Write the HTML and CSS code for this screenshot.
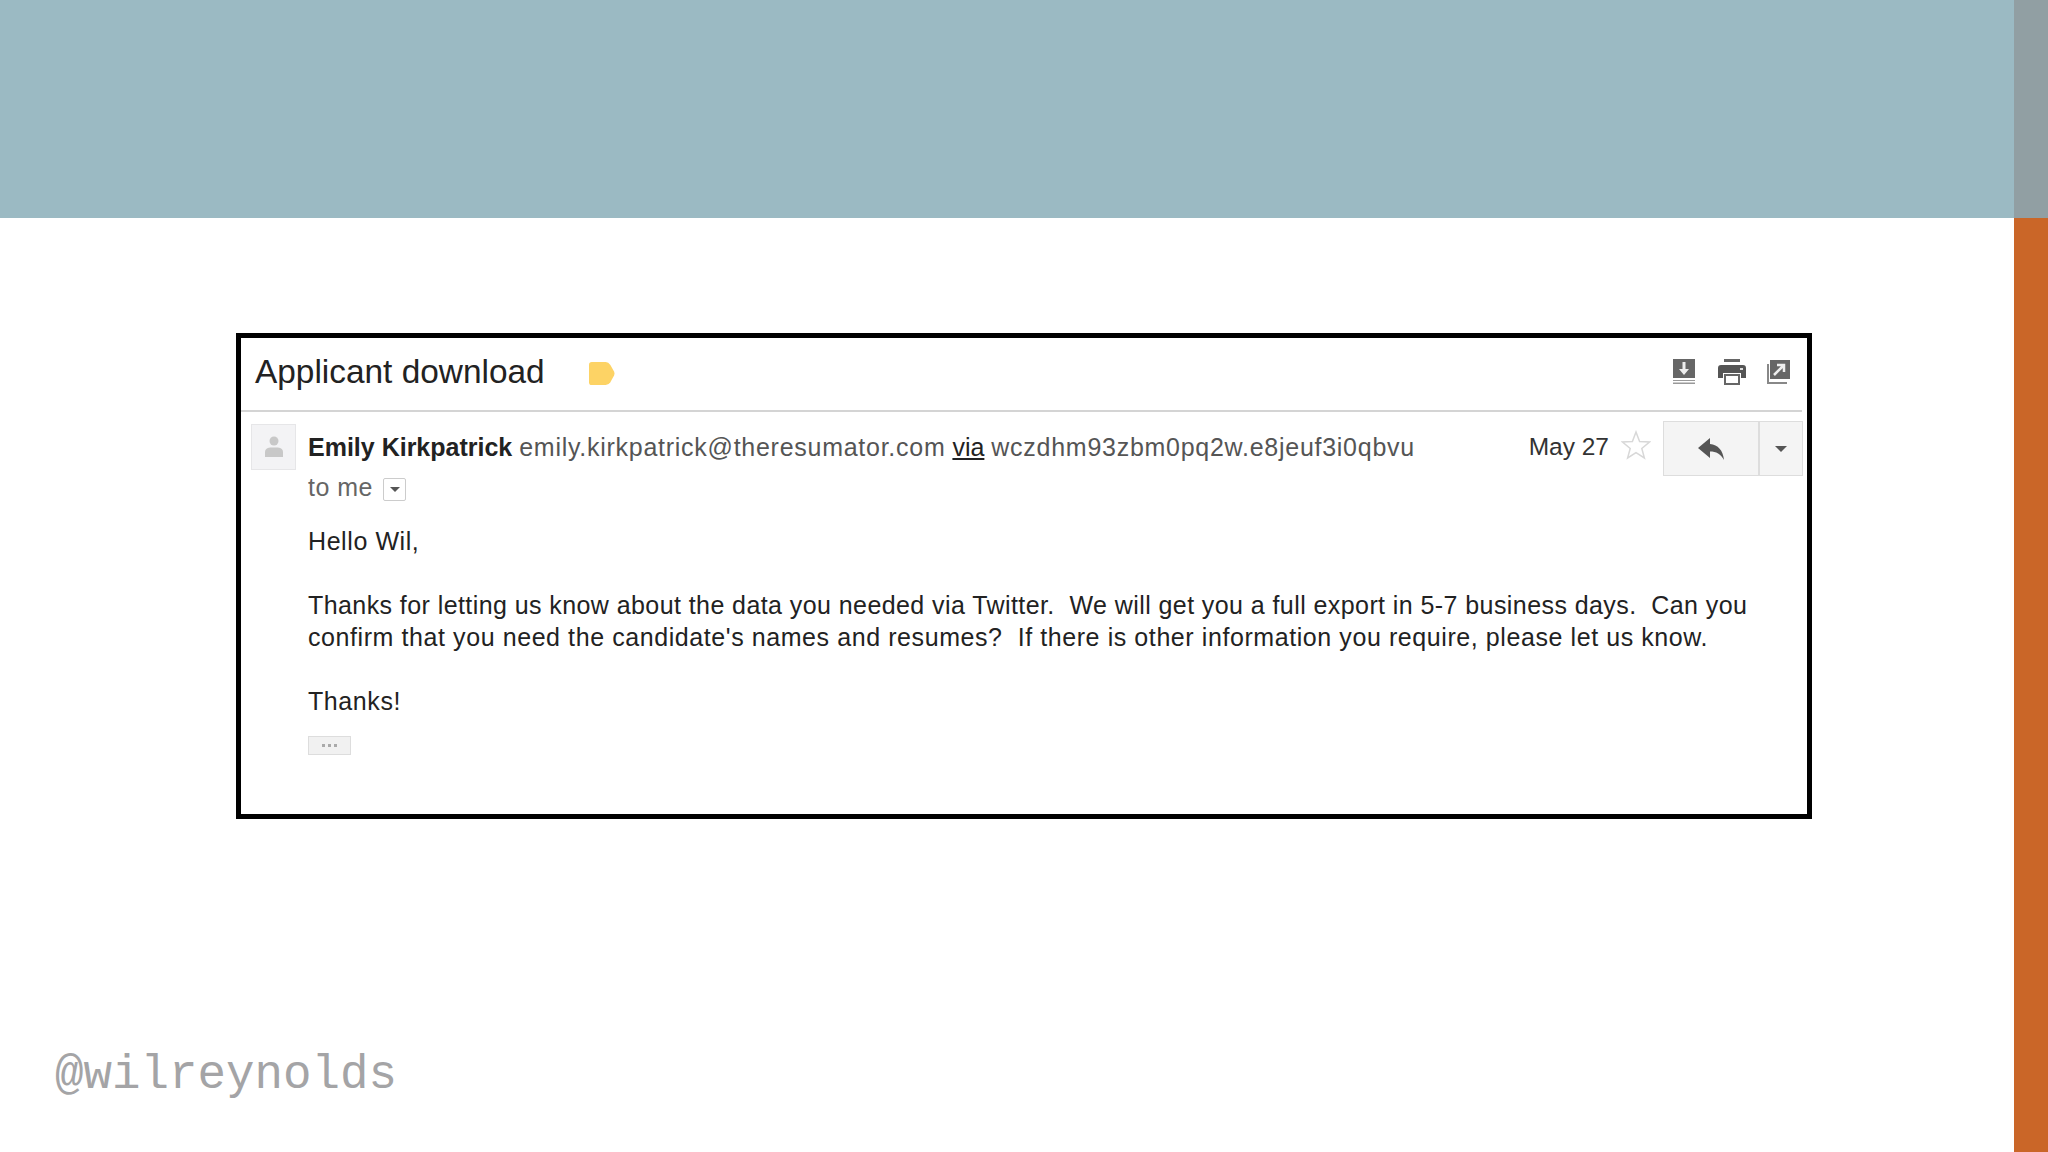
FILE: index.html
```html
<!DOCTYPE html>
<html lang="en">
<head>
    <meta charset="UTF-8">
    <title>Applicant download</title>
    <link rel="stylesheet" href="styles.css">
</head>
<body>
    <div class="slide">
        <div class="main">
            <div class="band"></div>
            <div class="content">
                <div class="mail">
                    <div class="subject">
                        <h1>Applicant download</h1>
                        <svg class="label" width="26" height="23" viewBox="0 0 28 24" preserveAspectRatio="none"><path d="M3 0H18Q21 0 23 3L27 10Q28 12 27 14L23 21Q21 24 18 24H3Q0 24 0 21V3Q0 0 3 0Z" fill="#fdd365"/></svg>
                        <div class="tools">
                            <svg width="26" height="26" viewBox="0 0 26 26"><path d="M1 0H23V19H1Z" fill="#666"/><path d="M1 21H23V22H1ZM1 23.500H23V25H1Z" fill="#999"/><path d="M10.500 3H13.500V10H17L12 16L7 10H10.500Z" fill="#eee"/></svg>
                            <svg width="28" height="26" viewBox="0 0 28 26"><path d="M6 0H22V3H6Z" fill="#666"/><path d="M3 6H25Q28 6 28 9V19H23V14H5V19H0V9Q0 6 3 6Z" fill="#555"/><path d="M7 16H21V25H7Z" fill="none" stroke="#666" stroke-width="2"/><path d="M22 9H25V11H22Z" fill="#ddd"/></svg>
                            <svg width="24" height="26" viewBox="0 0 24 26"><path d="M4 1H24V20H4Z" fill="#666"/><path d="M1 5H3V23H21V25H1Z" fill="#888"/><path d="M8 16L17 7M11 6H18V13" fill="none" stroke="#eee" stroke-width="2.500"/></svg>
                        </div>
                    </div>
                    <div class="message">
                        <div class="avatar">
                            <svg width="20" height="22" viewBox="0 0 20 22"><circle cx="10" cy="5" r="4.500" fill="#c8c8c8"/><path d="M1 21V16Q1 12 6 11.500H14Q19 12 19 16V21Z" fill="#c8c8c8"/></svg>
                        </div>
                        <div class="from">
                            <div class="sender"><b>Emily Kirkpatrick</b> <span class="addr">emily.kirkpatrick@theresumator.com</span> <u>via</u> <span class="addr">wczdhm93zbm0pq2w.e8jeuf3i0qbvu</span></div>
                            <div class="to">to me <span class="to-more"><i></i></span></div>
                        </div>
                        <div class="date">May 27</div>
                        <svg class="star" width="30" height="30" viewBox="0 0 30 30"><path d="M15 2L18.600 11.500L28.500 12L20.800 18.400L23.400 28L15 22.600L6.600 28L9.200 18.400L1.500 12L11.400 11.500Z" fill="#fff" stroke="#d8d8d8" stroke-width="1.500"/></svg>
                        <div class="reply-group">
                            <div class="reply">
                                <svg width="26" height="24" viewBox="0 0 26 24"><path d="M12 1V7C20 8 25 13 26 23C23 17 18 14.500 12 14.500V21L0 11Z" fill="#555"/></svg>
                            </div>
                            <div class="reply-more"><i></i></div>
                        </div>
                    </div>
                    <div class="body">
                        <p>Hello Wil,</p>
                        <p><span class="first-line">Thanks for letting us know about the data you needed via Twitter.&nbsp; We will get you a full export in 5-7 business days.&nbsp; Can you</span><br>confirm that you need the candidate's names and resumes?&nbsp; If there is other information you require, please let us know.</p>
                        <p>Thanks!</p>
                        <div class="trim"><i></i><i></i><i></i></div>
                    </div>
                </div>
                <div class="handle">@wilreynolds</div>
            </div>
        </div>
        <div class="side">
            <div class="side-top"></div>
            <div class="side-rest"></div>
        </div>
    </div>
</body>
</html>
```

FILE: styles.css
```css
html, body {
    margin: 0;
    height: 100%;
    background-color: #fff;
}
.slide {
    display: flex;
    height: 1152px;
    overflow: hidden;
    font-family: "Liberation Sans", Arial, sans-serif;
}
.main {
    flex: 1;
    display: flex;
    flex-direction: column;
}
.band {
    height: 218px;
    background-color: #9bbac3;
}
.content {
    flex: 1;
    padding: 115px 0 0 236px;
    position: relative;
}
.side {
    width: 34px;
    display: flex;
    flex-direction: column;
}
.side-top {
    height: 218px;
    background-color: #919fa3;
}
.side-rest {
    flex: 1;
    background-color: #ca6628;
}

/* mail screenshot */
.mail {
    box-sizing: border-box;
    width: 1576px;
    height: 486px;
    border: 5px solid #000;
    color: #222;
}
.subject {
    box-sizing: border-box;
    display: flex;
    align-items: center;
    height: 74px;
    margin-right: 5px;
    padding: 0 12px 5px 14px;
    border-bottom: 2px solid #d4d4d4;
}
.subject h1 {
    margin: 0;
    font-size: 33.400px;
    font-weight: normal;
    color: #222;
}
.label {
    margin: 3px 0 0 44px;
}
.tools {
    margin-left: auto;
    display: flex;
    align-items: center;
    gap: 20px;
}
.message {
    display: flex;
    align-items: flex-start;
    padding: 9px 4px 0 10px;
    font-size: 25px;
}
.avatar {
    box-sizing: border-box;
    width: 45px;
    height: 46px;
    margin-top: 3px;
    display: flex;
    align-items: center;
    justify-content: center;
    background-color: #f3f3f5;
    border: 1px solid #e6e6e8;
}
.from {
    margin-left: 12px;
    flex: 1;
}
.sender {
    height: 32px;
    line-height: 32px;
    margin-top: 10px;
}
.addr {
    color: #555;
    letter-spacing: 0.730px;
}
.to {
    margin-top: 8px;
    line-height: 32px;
    color: #666;
    letter-spacing: 0.500px;
    display: flex;
    align-items: center;
    gap: 10px;
}
.to-more {
    box-sizing: border-box;
    width: 23px;
    height: 23px;
    margin-top: 4px;
    border: 1px solid #ccc;
    border-radius: 2px;
    display: flex;
    align-items: center;
    justify-content: center;
}
.to-more i, .reply-more i {
    border-top: 6px solid #555;
    border-left: 6px solid transparent;
    border-right: 6px solid transparent;
}
.to-more i {
    border-width: 5px 5px 0;
}
.date {
    margin-top: 10px;
    line-height: 32px;
    font-size: 24.500px;
    color: #333;
}
.star {
    margin: 9px 0 0 12px;
}
.reply-group {
    display: flex;
    box-sizing: border-box;
    height: 55px;
    margin-left: 12px;
    border: 1px solid #ddd;
    background-color: #f4f4f4;
}
.reply {
    width: 94px;
    display: flex;
    align-items: center;
    justify-content: center;
    border-right: 2px solid #ddd;
}
.reply-more {
    width: 42px;
    display: flex;
    align-items: center;
    justify-content: center;
}
.body {
    padding: 0 0 0 67px;
    font-size: 25px;
    letter-spacing: 0.580px;
    line-height: 32px;
    color: #222;
}
.first-line {
    letter-spacing: 0.420px;
}
.body p {
    margin: 0 0 32px;
}
.body p:first-child {
    margin-top: 22px;
}
.body p:nth-child(3) {
    margin-bottom: 19px;
}
.trim {
    box-sizing: border-box;
    width: 43px;
    height: 19px;
    display: flex;
    align-items: center;
    justify-content: center;
    gap: 3px;
    background-color: #f1f1f1;
    border: 1px solid #ddd;
}
.trim i {
    width: 3px;
    height: 3px;
    background-color: #aaa;
}
.handle {
    position: absolute;
    left: 55px;
    top: 827px;
    font-family: "Liberation Mono", monospace;
    font-size: 47.500px;
    line-height: 60px;
    color: #a4a4a6;
}
```
